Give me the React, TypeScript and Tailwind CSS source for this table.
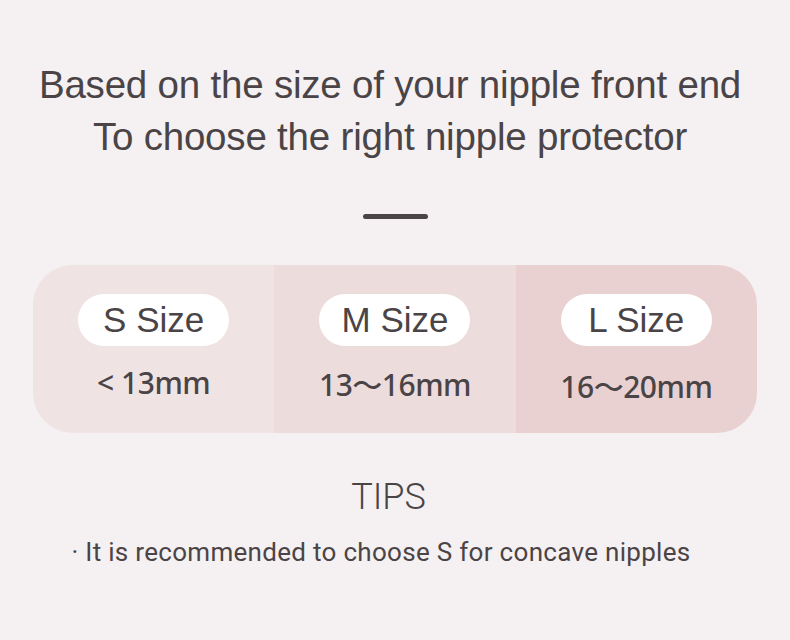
import React from 'react';

const sizes = [
  { label: 'S Size', range: '< 13mm', bg: 'bg-[#f0e3e4]', shift: 'mt-[14px]' },
  { label: 'M Size', range: '13～16mm', bg: 'bg-[#ecdcdb]', shift: 'mt-[16px]' },
  { label: 'L Size', range: '16～20mm', bg: 'bg-[#e9d1d2]', shift: 'mt-[18px]' },
];

export default function App() {
  return (
    <main className="w-[790px] h-[640px] bg-[#f5f0f1] text-[#4a4446] font-['Liberation_Sans','Noto_Sans_CJK_SC',sans-serif] flex flex-col items-center pt-[59px]">
      {/* Heading */}
      <h1 className="text-[38.5px] leading-[52px] text-center tracking-[-0.2px] pr-[10px]">
        Based on the size of your nipple front end
        <br />
        To choose the right nipple protector
      </h1>
      <div className="w-[65px] h-[5px] rounded-full bg-[#4a4446] mt-[51px]" />

      {/* Size table */}
      <div className="mt-[46px] w-[724px] h-[168px] rounded-[40px] overflow-hidden flex">
        {sizes.map((s) => (
          <div key={s.label} className={`${s.bg} flex-1 flex flex-col items-center pt-[29px]`}>
            <div className="w-[151px] h-[52px] rounded-full bg-white flex items-center justify-center text-[35px]">
              {s.label}
            </div>
            <div className={`${s.shift} text-[30px] font-medium font-['Noto_Sans','Noto_Sans_CJK_SC',sans-serif] tracking-[-0.5px]`}>
              {s.range}
            </div>
          </div>
        ))}
      </div>

      {/* Tips */}
      <div className="mt-[44px] text-[36px] font-light font-['Roboto',sans-serif] leading-[40px] pr-[13px]">TIPS</div>
      <p className="mt-[16px] text-[26px] font-['Roboto',sans-serif] tracking-[0.3px] pr-[28px]">
        · It is recommended to choose S for concave nipples
      </p>
    </main>
  );
}
